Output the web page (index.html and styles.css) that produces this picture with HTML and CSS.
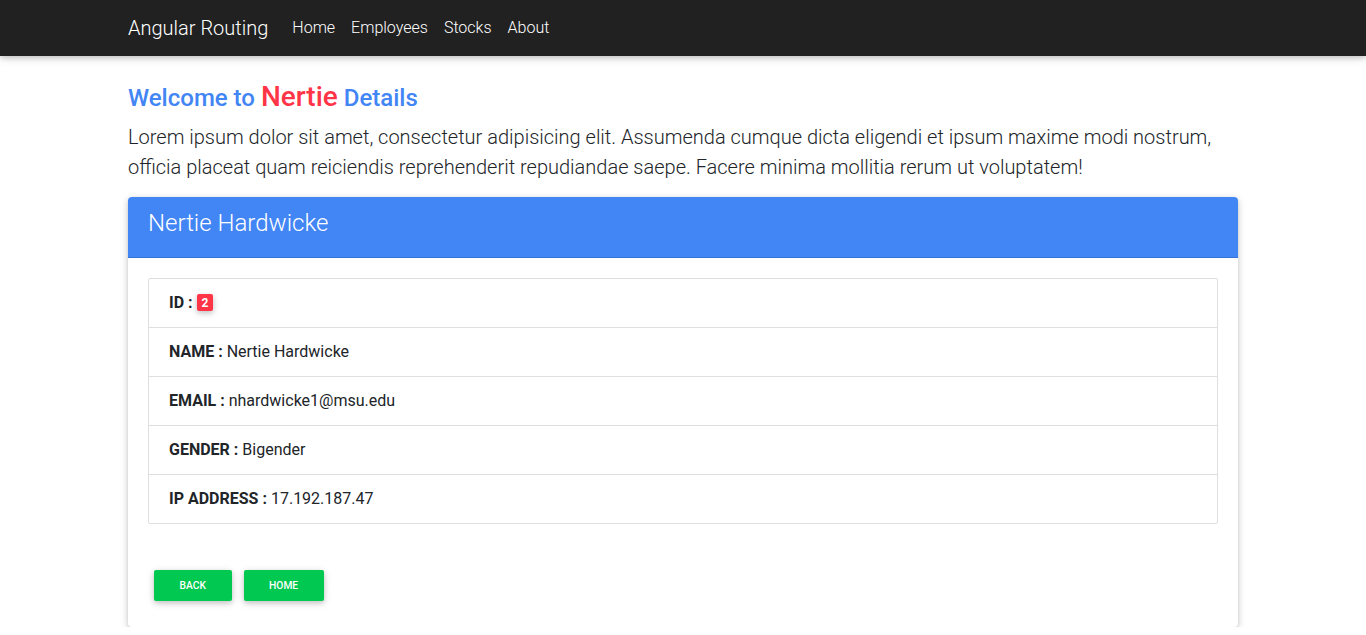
FILE: index.html
```html
<!DOCTYPE html>
<html lang="en">
<head>
<meta charset="utf-8">
<title>Angular Routing</title>
<link rel="stylesheet" href="styles.css">
</head>
<body>
<nav class="navbar">
  <div class="container nav-inner">
    <a class="brand" href="#">Angular Routing</a>
    <ul class="nav-links">
      <li><a href="#">Home</a></li>
      <li><a href="#">Employees</a></li>
      <li><a href="#">Stocks</a></li>
      <li><a href="#">About</a></li>
    </ul>
  </div>
</nav>
<main class="container main">
  <h4 class="title">Welcome to <span class="name">Nertie</span> Details</h4>
  <p class="lead">Lorem ipsum dolor sit amet, consectetur adipisicing elit. Assumenda cumque dicta eligendi et ipsum maxime modi nostrum, officia placeat quam reiciendis reprehenderit repudiandae saepe. Facere minima mollitia rerum ut voluptatem!</p>
  <div class="card">
    <div class="card-header"><h3 class="card-title">Nertie Hardwicke</h3></div>
    <div class="card-body">
      <ul class="list-group">
        <li class="list-item"><b>ID :</b> <span class="badge">2</span></li>
        <li class="list-item"><b>NAME :</b> Nertie Hardwicke</li>
        <li class="list-item"><b>EMAIL :</b> nhardwicke1@msu.edu</li>
        <li class="list-item"><b>GENDER :</b> Bigender</li>
        <li class="list-item"><b>IP ADDRESS :</b> 17.192.187.47</li>
      </ul>
      <div class="actions">
        <button class="btn">Back</button>
        <button class="btn">Home</button>
      </div>
    </div>
  </div>
</main>
</body>
</html>
```

FILE: styles.css
```css
* { box-sizing: border-box; }
html, body {
  margin: 0;
  padding: 0;
}
body {
  font-family: Roboto, "Liberation Sans", sans-serif;
  font-weight: 300;
  color: #212529;
  background: #fff;
  font-size: 16px;
  line-height: 1.5;
}
.container {
  width: 1110px;
  margin: 0 auto;
}
.navbar {
  background: #212121;
  height: 56px;
  box-shadow: 0 2px 5px 0 rgba(0,0,0,.16), 0 2px 10px 0 rgba(0,0,0,.12);
  position: relative;
  z-index: 2;
}
.nav-inner {
  display: flex;
  align-items: center;
  height: 56px;
}
.brand {
  color: #fff;
  text-decoration: none;
  font-size: 20px;
  font-weight: 300;
  margin-right: 16px;
  line-height: 30px;
}
.nav-links {
  display: flex;
  list-style: none;
  margin: 0;
  padding: 0;
}
.nav-links a {
  display: block;
  color: #fff;
  text-decoration: none;
  font-size: 16px;
  font-weight: 300;
  padding: 8px;
}
.main {
  padding-top: 24px;
}
.title {
  margin: 0 0 8px;
  font-size: 24px;
  font-weight: 500;
  line-height: 1.2;
  color: #4285f4;
}
.name {
  font-size: 28px;
  color: #ff3547;
}
.lead {
  margin: 0 0 15px;
  font-size: 20px;
  font-weight: 300;
  line-height: 30px;
}
.card {
  border-radius: 4px;
  background: #fff;
  box-shadow: 0 2px 5px 0 rgba(0,0,0,.16), 0 2px 10px 0 rgba(0,0,0,.12);
  overflow: hidden;
}
.card-header {
  background: #4285f4;
  color: #fff;
  padding: 12px 20px;
  border-bottom: 1px solid rgba(0,0,0,.125);
}
.card-title {
  margin: 0 0 8px;
  font-size: 24px;
  font-weight: 300;
  line-height: 28px;
}
.card-body {
  padding: 20px;
}
.list-group {
  list-style: none;
  margin: 0;
  padding: 0;
  border: 1px solid rgba(0,0,0,.125);
  border-radius: 2px;
}
.list-item {
  padding: 12px 20px;
  font-size: 16px;
  font-weight: 400;
  line-height: 24px;
  border-top: 1px solid rgba(0,0,0,.125);
}
.list-item:first-child { border-top: 0; }
.list-item b { font-weight: 700; }
.badge {
  display: inline-block;
  background: #ff3547;
  color: #fff;
  font-size: 12px;
  font-weight: 700;
  line-height: 1;
  padding: 3px 5px 2px;
  border-radius: 2px;
  box-shadow: 0 2px 5px 0 rgba(0,0,0,.16), 0 2px 10px 0 rgba(0,0,0,.12);
  vertical-align: 1px;
}
.actions {
  padding-top: 40px;
  display: flex;
}
.btn {
  font-family: Roboto, "Liberation Sans", sans-serif;
  background: #00c851;
  color: #fff;
  border: 0;
  border-radius: 2px;
  text-transform: uppercase;
  font-size: 10.24px;
  font-weight: 500;
  line-height: 15px;
  padding: 8px 25.6px;
  margin: 6px;
  box-shadow: 0 2px 5px 0 rgba(0,0,0,.16), 0 2px 10px 0 rgba(0,0,0,.12);
  cursor: pointer;
}
```
